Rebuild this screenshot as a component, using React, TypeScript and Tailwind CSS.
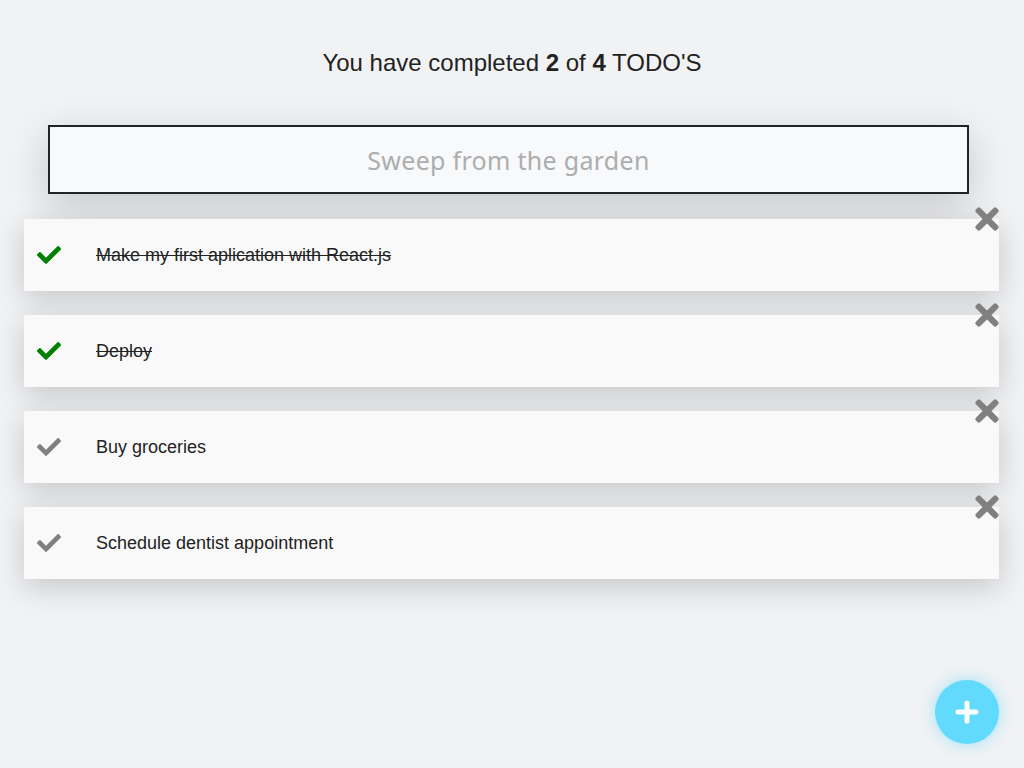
import { FaCheck, FaTimes, FaPlus } from 'react-icons/fa';

const todos = [
  { id: 1, text: 'Make my first aplication with React.js', done: true },
  { id: 2, text: 'Deploy', done: true },
  { id: 3, text: 'Buy groceries', done: false },
  { id: 4, text: 'Schedule dentist appointment', done: false },
];

export default function App() {
  const completed = todos.filter((t) => t.done).length;

  return (
    <div className="relative min-h-[768px] bg-[#f1f2f4] font-['Liberation_Sans',Arial,sans-serif] text-[#222]">
      <h1 className="pt-[48px] text-center text-[24px] leading-[30px]">
        You have completed <b>{completed}</b> of <b>{todos.length}</b> TODO&apos;S
      </h1>

      {/* New todo input */}
      <div className="mt-[47px] ml-[48px] w-[921px]">
        <input
          type="text"
          placeholder="Sweep from the garden"
          className="h-[69px] w-full border-2 border-[#222229] bg-[#f8f9fb] text-center font-['Noto_Sans','Open_Sans',sans-serif] text-[25px] tracking-[0.3px] text-[#333] outline-none placeholder:text-[#adadad] shadow-[0_12px_40px_rgba(0,0,0,0.18)]"
        />
      </div>

      {/* List */}
      <ul className="mt-[25px] ml-[24px] mr-[25px] flex flex-col gap-[24px]">
        {todos.map((todo) => (
          <li
            key={todo.id}
            className="relative flex h-[72px] items-center bg-[#f9f9f9] shadow-[0_8px_30px_rgba(0,0,0,0.18)]"
          >
            <span className="ml-[12px] flex w-[26px] justify-center">
              <FaCheck
                className={todo.done ? 'text-[#008000]' : 'text-[#808080]'}
                size={24}
              />
            </span>
            <span
              className={`ml-[34px] text-[18px] ${todo.done ? 'line-through decoration-[#222]' : ''}`}
            >
              {todo.text}
            </span>
            <button className="absolute right-0 top-[-17px] text-[#808080]" aria-label="Delete">
              <FaTimes size={34} className="-mr-[5px]" />
            </button>
          </li>
        ))}
      </ul>

      {/* Add button */}
      <button
        className="absolute right-[25px] top-[680px] flex h-[64px] w-[64px] items-center justify-center rounded-full bg-[#61dafb] text-white shadow-[0_0_16px_rgba(97,218,251,0.6)]"
        aria-label="Add todo"
      >
        <FaPlus size={26} />
      </button>
    </div>
  );
}
